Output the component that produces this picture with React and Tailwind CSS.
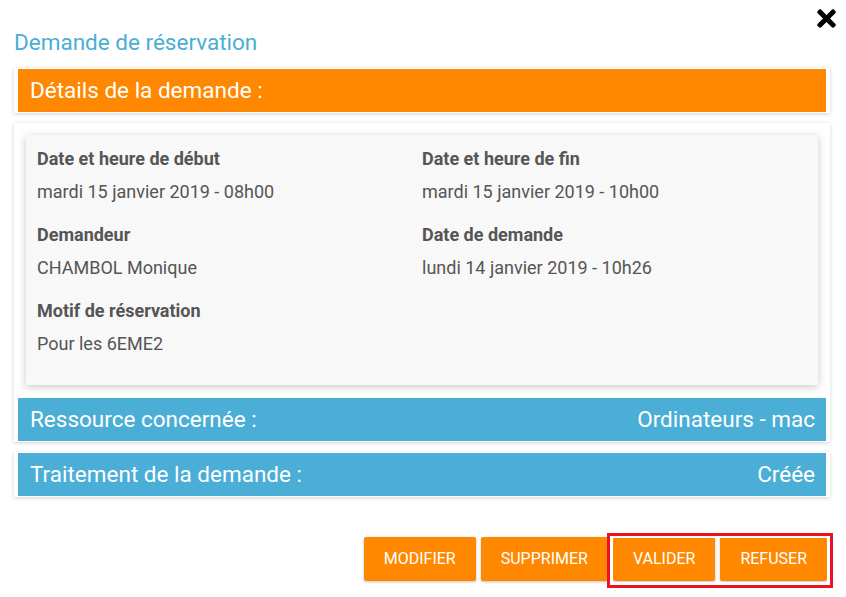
import React from "react";
import { FaTimes } from "react-icons/fa";

function Field({ label, value }) {
  return (
    <div>
      <div className="text-[18px] leading-[24px] font-bold text-[#555555]">{label}</div>
      <div className="mt-[9px] text-[18px] leading-[24px] text-[#555555]">{value}</div>
    </div>
  );
}

function Bar({ color, left, right }) {
  return (
    <div className={`${color} h-[43px] flex items-center justify-between pl-[12px] pr-[11px] text-white text-[22.5px]`}>
      <span>{left}</span>
      {right ? <span>{right}</span> : null}
    </div>
  );
}

function Btn({ children }) {
  return (
    <button className="h-[44px] px-[20px] bg-[#ff8800] text-white text-[16px] uppercase rounded-[2px] shadow-[0_1px_3px_rgba(0,0,0,0.25)]">
      {children}
    </button>
  );
}

export default function App() {
  return (
    <div className="relative w-[846px] h-[597px] bg-white font-['Roboto',sans-serif] overflow-hidden">
      <div className="absolute left-[813px] top-[5px] text-black">
        <FaTimes size={27} />
      </div>
      <div className="px-[14px] pr-[16px] pt-[28px]">
        <h1 className="text-[22.5px] leading-[28px] text-[#4aaed6] font-normal">Demande de réservation</h1>

        <div className="mt-[12px] bg-white px-[4px] py-px shadow-[0_1px_4px_rgba(0,0,0,0.18)]">
          <Bar color="bg-[#ff8800]" left="Détails de la demande :" />
        </div>

        <div className="mt-[10px] bg-white px-[4px] pt-[12px] pb-px shadow-[0_1px_4px_rgba(0,0,0,0.18)]">
          <div className="mx-[8px] bg-[#f8f8f8] px-[11px] pt-[12px] pb-[29px] shadow-[0_2px_8px_rgba(0,0,0,0.22)]">
            <div className="grid grid-cols-[385px_385px] gap-y-[19px]">
              <Field label="Date et heure de début" value="mardi 15 janvier 2019 - 08h00" />
              <Field label="Date et heure de fin" value="mardi 15 janvier 2019 - 10h00" />
              <Field label="Demandeur" value="CHAMBOL Monique" />
              <Field label="Date de demande" value="lundi 14 janvier 2019 - 10h26" />
              <Field label="Motif de réservation" value="Pour les 6EME2" />
            </div>
          </div>
          <div className="mt-[13px]">
            <Bar color="bg-[#4aaed6]" left="Ressource concernée :" right="Ordinateurs - mac" />
          </div>
        </div>

        <div className="mt-[10px] bg-white px-[4px] py-px shadow-[0_1px_4px_rgba(0,0,0,0.18)]">
          <Bar color="bg-[#4aaed6]" left="Traitement de la demande :" right="Créée" />
        </div>
      </div>

      <div className="mt-[40px] flex justify-end gap-[5px] pr-[19px]">
        <Btn>Modifier</Btn>
        <Btn>Supprimer</Btn>
        <Btn>Valider</Btn>
        <Btn>Refuser</Btn>
      </div>

      <div className="absolute left-[607px] top-[533px] w-[226px] h-[55px] border-[3px] border-[#e8131f] pointer-events-none">
        <div className="w-full h-full border-[3px] border-white border-t-[2px]" />
      </div>
    </div>
  );
}
